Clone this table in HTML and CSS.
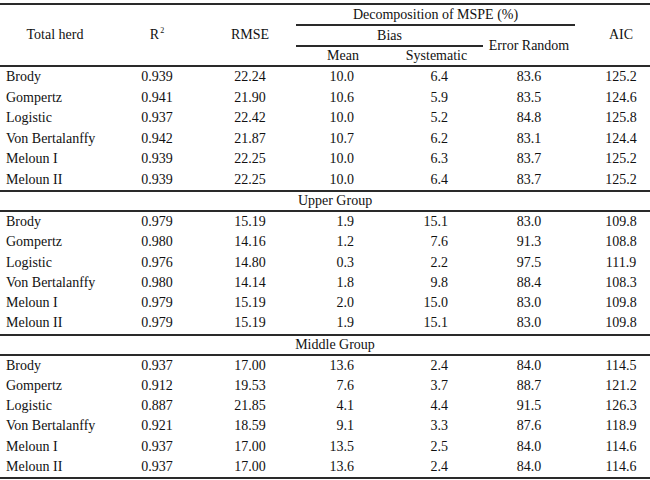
FILE: index.html
```html
<!DOCTYPE html>
<html lang="en">
<head>
<meta charset="utf-8">
<title>Model fit comparison</title>
<link rel="stylesheet" href="styles.css">
</head>
<body>
<table class="fit">
  <colgroup>
    <col class="c-model">
    <col class="c-r2">
    <col class="c-rmse">
    <col class="c-mean">
    <col class="c-sys">
    <col class="c-err">
    <col class="c-aic">
  </colgroup>
  <thead>
    <tr class="h1">
      <th rowspan="3">Total herd</th>
      <th rowspan="3">R<sup>2</sup></th>
      <th rowspan="3">RMSE</th>
      <th colspan="3" class="under">Decomposition of MSPE (%)</th>
      <th rowspan="3" class="aic">AIC</th>
    </tr>
    <tr class="h2">
      <th colspan="2" class="under">Bias</th>
      <th rowspan="2">Error Random</th>
    </tr>
    <tr class="h3">
      <th>Mean</th>
      <th>Systematic</th>
    </tr>
  </thead>
  <tbody class="sec">
    <tr><td class="name">Brody</td><td>0.939</td><td>22.24</td><td class="num">10.0</td><td class="num">6.4</td><td>83.6</td><td class="aic">125.2</td></tr>
    <tr><td class="name">Gompertz</td><td>0.941</td><td>21.90</td><td class="num">10.6</td><td class="num">5.9</td><td>83.5</td><td class="aic">124.6</td></tr>
    <tr><td class="name">Logistic</td><td>0.937</td><td>22.42</td><td class="num">10.0</td><td class="num">5.2</td><td>84.8</td><td class="aic">125.8</td></tr>
    <tr><td class="name">Von Bertalanffy</td><td>0.942</td><td>21.87</td><td class="num">10.7</td><td class="num">6.2</td><td>83.1</td><td class="aic">124.4</td></tr>
    <tr><td class="name">Meloun I</td><td>0.939</td><td>22.25</td><td class="num">10.0</td><td class="num">6.3</td><td>83.7</td><td class="aic">125.2</td></tr>
    <tr class="last"><td class="name">Meloun II</td><td>0.939</td><td>22.25</td><td class="num">10.0</td><td class="num">6.4</td><td>83.7</td><td class="aic">125.2</td></tr>
  </tbody>
  <tbody class="sec sec-mid">
    <tr class="group"><td colspan="7">Upper Group</td></tr>
    <tr><td class="name">Brody</td><td>0.979</td><td>15.19</td><td class="num">1.9</td><td class="num">15.1</td><td>83.0</td><td class="aic">109.8</td></tr>
    <tr><td class="name">Gompertz</td><td>0.980</td><td>14.16</td><td class="num">1.2</td><td class="num">7.6</td><td>91.3</td><td class="aic">108.8</td></tr>
    <tr><td class="name">Logistic</td><td>0.976</td><td>14.80</td><td class="num">0.3</td><td class="num">2.2</td><td>97.5</td><td class="aic">111.9</td></tr>
    <tr><td class="name">Von Bertalanffy</td><td>0.980</td><td>14.14</td><td class="num">1.8</td><td class="num">9.8</td><td>88.4</td><td class="aic">108.3</td></tr>
    <tr><td class="name">Meloun I</td><td>0.979</td><td>15.19</td><td class="num">2.0</td><td class="num">15.0</td><td>83.0</td><td class="aic">109.8</td></tr>
    <tr class="last"><td class="name">Meloun II</td><td>0.979</td><td>15.19</td><td class="num">1.9</td><td class="num">15.1</td><td>83.0</td><td class="aic">109.8</td></tr>
  </tbody>
  <tbody class="sec sec-tight">
    <tr class="group"><td colspan="7">Middle Group</td></tr>
    <tr><td class="name">Brody</td><td>0.937</td><td>17.00</td><td class="num">13.6</td><td class="num">2.4</td><td>84.0</td><td class="aic">114.5</td></tr>
    <tr><td class="name">Gompertz</td><td>0.912</td><td>19.53</td><td class="num">7.6</td><td class="num">3.7</td><td>88.7</td><td class="aic">121.2</td></tr>
    <tr><td class="name">Logistic</td><td>0.887</td><td>21.85</td><td class="num">4.1</td><td class="num">4.4</td><td>91.5</td><td class="aic">126.3</td></tr>
    <tr><td class="name">Von Bertalanffy</td><td>0.921</td><td>18.59</td><td class="num">9.1</td><td class="num">3.3</td><td>87.6</td><td class="aic">118.9</td></tr>
    <tr><td class="name">Meloun I</td><td>0.937</td><td>17.00</td><td class="num">13.5</td><td class="num">2.5</td><td>84.0</td><td class="aic">114.6</td></tr>
    <tr class="last"><td class="name">Meloun II</td><td>0.937</td><td>17.00</td><td class="num">13.6</td><td class="num">2.4</td><td>84.0</td><td class="aic">114.6</td></tr>
  </tbody>
</table>
</body>
</html>
```

FILE: styles.css
```css
html, body {
  margin: 0;
  padding: 0;
  background: #ffffff;
}

body {
  font-family: "Liberation Serif", "Times New Roman", serif;
  font-size: 14px;
  color: #111111;
}

.fit {
  width: 650px;
  table-layout: fixed;
  border-collapse: collapse;
  margin-top: 3px;
}

.c-model { width: 110px; }
.c-r2 { width: 94px; }
.c-rmse { width: 92px; }
.c-mean { width: 94px; }
.c-sys { width: 93px; }
.c-err { width: 92px; }
.c-aic { width: 75px; }

.fit th,
.fit td {
  padding: 0;
  font-weight: normal;
  text-align: center;
  vertical-align: middle;
  white-space: nowrap;
  line-height: 16px;
}

.fit thead tr:first-child th {
  border-top: 2px solid #2a2a2a;
}

.fit thead tr.h1 { height: 21px; }
.fit thead tr.h2 { height: 21px; }
.fit thead tr.h3 { height: 20px; }

.fit thead th[rowspan="3"],
.fit thead tr.h3 th,
.fit thead tr.h2 th[rowspan="2"] {
  border-bottom: 2px solid #2a2a2a;
}

.fit th.under {
  border-bottom: 2px solid #2a2a2a;
}

.fit sup {
  font-size: 8px;
  line-height: 0;
  vertical-align: 6px;
  margin-left: 1px;
}

.fit tbody td {
  line-height: 20.5px;
}

.fit tbody.sec-mid td {
  line-height: 20.3px;
}

.fit tbody.sec-tight td {
  line-height: 20.2px;
}

.fit td.name {
  text-align: left;
  padding-left: 6px;
}

.fit td.num {
  text-align: right;
}

.fit tbody td:nth-child(4) { padding-right: 36px; }
.fit tbody td:nth-child(5) { padding-right: 35px; }

.fit .aic {
  padding-left: 17px;
}

.fit tr.last td {
  border-bottom: 2px solid #2a2a2a;
}

.fit tbody tr.group td {
  line-height: 18px;
  border-bottom: 2px solid #2a2a2a;
  padding-left: 20px;
  text-align: center;
}
```
